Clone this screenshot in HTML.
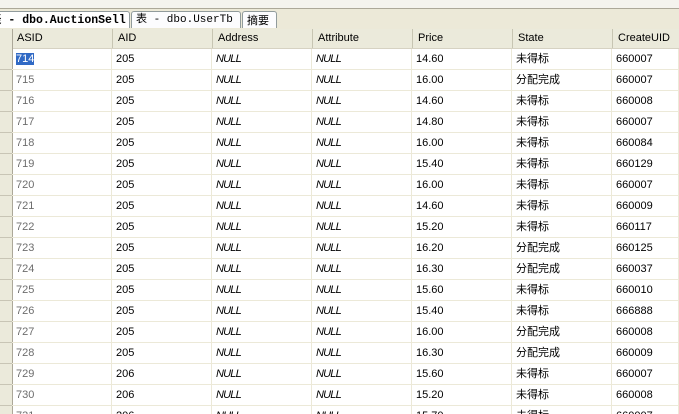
<!DOCTYPE html>
<html><head><style>
html,body{margin:0;height:414px;overflow:hidden}
body{width:679px;background:#fff;font-family:"Liberation Sans","Noto Sans CJK SC",sans-serif;font-size:11px;position:relative}
#wrap{position:absolute;left:0;top:0;width:679px;height:414px;overflow:hidden}
.top{position:absolute;left:0;top:0;width:679px;height:29px;background:#ece9d8}
.top .band{position:absolute;left:0;top:0;width:679px;height:8px;background:#f4f3ee;border-bottom:1px solid #aca899}
.tab{position:absolute;top:11px;height:17px;border:1px solid #919b9c;border-bottom:none;border-radius:3px 3px 0 0;font-family:"Liberation Mono","Noto Sans CJK SC",monospace;font-size:11px;line-height:17px;white-space:nowrap;background:#fcfcfe;padding-left:5px;box-sizing:border-box;overflow:hidden}
.hdr{position:absolute;left:0;top:29px;width:679px;height:20px;background:#ebeadb;border-bottom:1px solid #d6d2c2;box-sizing:border-box}
.hdr div{position:absolute;top:0;height:19px;line-height:19px;padding-left:5px;border-left:1px solid #c7c5b2;box-sizing:border-box;color:#000}
.rh{position:absolute;left:0;top:29px;width:12px;height:385px;background:#ebeadb;border-right:1px solid #aca899}
.row{position:absolute;left:12px;width:667px;height:21px}
.row div{position:absolute;top:0;height:21px;line-height:21px;padding-left:4px;border-right:1px solid #ece9d8;border-bottom:1px solid #ece9d8;box-sizing:border-box;white-space:nowrap}
.n{font-style:italic;font-size:11px;letter-spacing:-0.8px}
.g{color:#6d6d6d}
.rhl{position:absolute;left:0;width:12px;height:1px;background:#c8c5b5}
</style></head><body><div id="wrap">
<div class="top"><div class="band"></div>
<div class="tab" style="left:-14px;width:144px;font-weight:bold;font-size:11.5px;background:#fff;padding-left:3px">表 - dbo.AuctionSell</div>
<div class="tab" style="left:131px;width:110px;padding-left:4px">表 - dbo.UserTb</div>
<div class="tab" style="left:242px;width:35px;font-family:'Noto Sans CJK SC',sans-serif;font-size:11px;padding-left:4px">摘要</div>
</div>
<div class="hdr">
<div style="left:12px;width:100px;border-left:none">ASID</div>
<div style="left:112px;width:100px">AID</div>
<div style="left:212px;width:100px">Address</div>
<div style="left:312px;width:100px">Attribute</div>
<div style="left:412px;width:100px">Price</div>
<div style="left:512px;width:100px">State</div>
<div style="left:612px;width:67px">CreateUID</div>
</div>
<div class="rh"></div>
<div id="rows"></div>
</div>
<script>
var d=[[714,205,"14.60","未得标",660007],[715,205,"16.00","分配完成",660007],[716,205,"14.60","未得标",660008],[717,205,"14.80","未得标",660007],[718,205,"16.00","未得标",660084],[719,205,"15.40","未得标",660129],[720,205,"16.00","未得标",660007],[721,205,"14.60","未得标",660009],[722,205,"15.20","未得标",660117],[723,205,"16.20","分配完成",660125],[724,205,"16.30","分配完成",660037],[725,205,"15.60","未得标",660010],[726,205,"15.40","未得标",666888],[727,205,"16.00","分配完成",660008],[728,205,"16.30","分配完成",660009],[729,206,"15.60","未得标",660007],[730,206,"15.20","未得标",660008],[731,206,"15.70","未得标",660007]];
var h="";
d.forEach(function(r,i){var t=49+i*21;
var a=i==0?'<span style="background:#316ac5;color:#fff">714</span>':r[0];
h+='<div class="row" style="top:'+t+'px"><div class="g" style="left:0;width:100px">'+a+'</div><div style="left:100px;width:100px">'+r[1]+'</div><div class="n" style="left:200px;width:100px">NULL</div><div class="n" style="left:300px;width:100px">NULL</div><div style="left:400px;width:100px">'+r[2]+'</div><div style="left:500px;width:100px">'+r[3]+'</div><div style="left:600px;width:67px">'+r[4]+'</div></div>';
h+='<div class="rhl" style="top:'+(t+20)+'px"></div>';});
document.getElementById("rows").innerHTML=h;
</script>
</body></html>
